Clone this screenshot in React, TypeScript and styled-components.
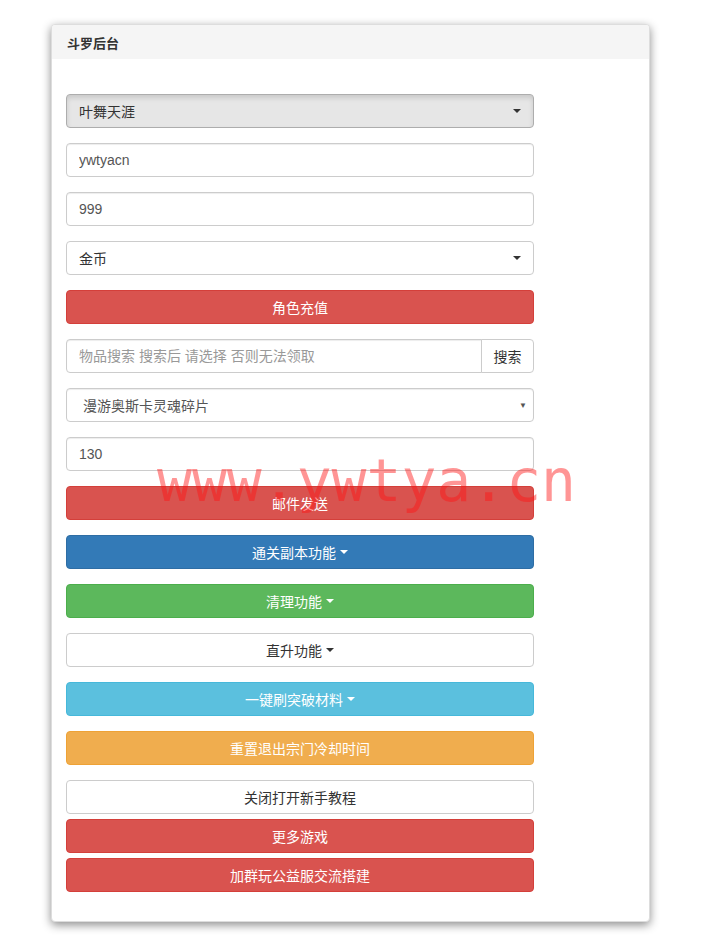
import React from "react";
import styled, { createGlobalStyle, css } from "styled-components";

const GlobalStyle = createGlobalStyle`
    html, body {
        margin: 0;
        padding: 0;
        background: #fff;
    }
    body {
        font-family: "Liberation Sans", "Noto Sans CJK SC", sans-serif;
        font-size: 14px;
        color: #333;
    }
    * {
        box-sizing: border-box;
    }
`;

type Variant = "danger" | "primary" | "success" | "info" | "warning" | "default";

const palette: Record<Variant, { bg: string; border: string; color: string }> = {
    danger: { bg: "#d9534f", border: "#d43f3a", color: "#fff" },
    primary: { bg: "#337ab7", border: "#2e6da4", color: "#fff" },
    success: { bg: "#5cb85c", border: "#4cae4c", color: "#fff" },
    info: { bg: "#5bc0de", border: "#46b8da", color: "#fff" },
    warning: { bg: "#f0ad4e", border: "#eea236", color: "#fff" },
    default: { bg: "#fff", border: "#ccc", color: "#333" },
};

const App = () => {
    return (
        <Page>
            <GlobalStyle />
            <Panel>
                <PanelHeading>斗罗后台</PanelHeading>
                <PanelBody>
                    <Form>
                        <Group>
                            <DropButton active>
                                <span>叶舞天涯</span>
                                <Caret />
                            </DropButton>
                        </Group>
                        <Group>
                            <Input defaultValue="ywtyacn" />
                        </Group>
                        <Group>
                            <Input defaultValue="999" />
                        </Group>
                        <Group>
                            <DropButton>
                                <span>金币</span>
                                <Caret />
                            </DropButton>
                        </Group>
                        <Group>
                            <Button variant="danger">角色充值</Button>
                        </Group>
                        <Group>
                            <InputGroup>
                                <GroupInput placeholder="物品搜索 搜索后 请选择 否则无法领取" />
                                <AddonButton>搜索</AddonButton>
                            </InputGroup>
                        </Group>
                        <Group>
                            <NativeSelect>
                                <span>漫游奥斯卡灵魂碎片</span>
                                <SelectArrow>▼</SelectArrow>
                            </NativeSelect>
                        </Group>
                        <Group>
                            <Input defaultValue="130" />
                        </Group>
                        <Group>
                            <Button variant="danger">邮件发送</Button>
                        </Group>
                        <Group>
                            <Button variant="primary">通关副本功能 <Caret /></Button>
                        </Group>
                        <Group>
                            <Button variant="success">清理功能 <Caret /></Button>
                        </Group>
                        <Group>
                            <Button variant="default">直升功能 <Caret /></Button>
                        </Group>
                        <Group>
                            <Button variant="info">一键刷突破材料 <Caret /></Button>
                        </Group>
                        <Group>
                            <Button variant="warning">重置退出宗门冷却时间</Button>
                        </Group>
                        <Group tight>
                            <Button variant="default">关闭打开新手教程</Button>
                        </Group>
                        <Group tight>
                            <Button variant="danger">更多游戏</Button>
                        </Group>
                        <Group last>
                            <Button variant="danger">加群玩公益服交流搭建</Button>
                        </Group>
                    </Form>
                </PanelBody>
            </Panel>
            <Watermark>www.ywtya.cn</Watermark>
        </Page>
    );
};

export default App;



const Page = styled.div`
    position: relative;
    padding: 24px 0 24px 51px;
    min-height: 945px;
`;

const Panel = styled.div`
    width: 599px;
    background: #fff;
    border: 1px solid #ddd;
    border-radius: 4px;
    box-shadow: 0 3px 10px rgba(0, 0, 0, 0.45);
    overflow: hidden;
`;

const PanelHeading = styled.div`
    height: 34px;
    padding: 0 15px;
    display: flex;
    align-items: center;
    background: #f5f5f5;
    font-family: "Noto Sans CJK SC", sans-serif;
    font-weight: bold;
    font-size: 13px;
    color: #333;
`;

const PanelBody = styled.div`
    padding: 35px 14px 29px;
`;

const Form = styled.div`
    width: 468px;
    display: flex;
    flex-direction: column;
`;

const Group = styled.div<{ tight?: boolean; last?: boolean }>`
    margin-bottom: ${(p) => (p.last ? "0" : p.tight ? "5px" : "15px")};
`;

const controlBase = css`
    width: 100%;
    height: 34px;
    font-family: "Liberation Sans", "Noto Sans CJK SC", sans-serif;
    font-size: 14px;
    border-radius: 4px;
`;

const Input = styled.input`
    ${controlBase};
    display: block;
    padding: 6px 12px;
    color: #555;
    background: #fff;
    border: 1px solid #ccc;
    box-shadow: inset 0 1px 1px rgba(0, 0, 0, 0.075);
    outline: none;
`;

const Button = styled.button<{ variant: Variant }>`
    ${controlBase};
    display: flex;
    align-items: center;
    justify-content: center;
    padding: 6px 12px;
    cursor: pointer;
    background: ${(p) => palette[p.variant].bg};
    border: 1px solid ${(p) => palette[p.variant].border};
    color: ${(p) => palette[p.variant].color};
`;

const DropButton = styled.button<{ active?: boolean }>`
    ${controlBase};
    display: flex;
    align-items: center;
    justify-content: space-between;
    padding: 6px 12px;
    color: #333;
    text-align: left;
    cursor: pointer;
    background: ${(p) => (p.active ? "#e6e6e6" : "#fff")};
    border: 1px solid ${(p) => (p.active ? "#adadad" : "#ccc")};
    box-shadow: ${(p) => (p.active ? "inset 0 3px 5px rgba(0, 0, 0, 0.125)" : "none")};
`;

const Caret = styled.span`
    display: inline-block;
    width: 0;
    height: 0;
    margin-left: 4px;
    border-top: 4px solid;
    border-right: 4px solid transparent;
    border-left: 4px solid transparent;
    vertical-align: middle;
`;

const InputGroup = styled.div`
    display: flex;
    width: 100%;
`;

const GroupInput = styled.input`
    ${controlBase};
    flex: 1;
    min-width: 0;
    padding: 6px 12px;
    color: #555;
    border: 1px solid #ccc;
    border-radius: 4px 0 0 4px;
    box-shadow: inset 0 1px 1px rgba(0, 0, 0, 0.075);
    outline: none;

    &::placeholder {
        color: #999;
    }
`;

const AddonButton = styled.button`
    height: 34px;
    width: 53px;
    margin-left: -1px;
    padding: 0;
    font-family: "Noto Sans CJK SC", sans-serif;
    font-size: 14px;
    color: #333;
    background: #fff;
    border: 1px solid #ccc;
    border-radius: 0 4px 4px 0;
`;

const NativeSelect = styled.div`
    ${controlBase};
    display: flex;
    align-items: center;
    justify-content: space-between;
    padding: 0 6px 0 16px;
    color: #555;
    background: #fff;
    border: 1px solid #ccc;
    box-shadow: inset 0 1px 1px rgba(0, 0, 0, 0.075);
`;

const SelectArrow = styled.span`
    font-size: 8px;
    color: #555;
`;

const Watermark = styled.div`
    position: absolute;
    left: 157px;
    top: 452px;
    font-family: "DejaVu Sans Mono", "Liberation Mono", monospace;
    font-size: 58px;
    line-height: 1;
    color: rgba(255, 20, 20, 0.45);
    pointer-events: none;
    white-space: nowrap;
`;
